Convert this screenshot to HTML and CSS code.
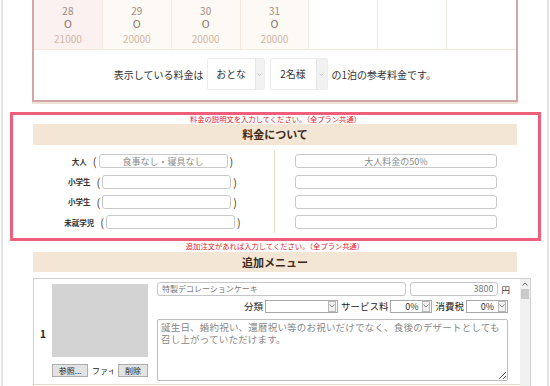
FILE: index.html
```html
<!DOCTYPE html>
<html>
<head>
	<title>料金設定</title>
	<meta charset="utf-8">
	<link rel="stylesheet" href="styles.css">
</head>
<body>
	<div class="page">
		<div class="calendar">
			<div class="cal-grid">
				<div class="cal-cell today"><span class="day">28</span><span class="mark">O</span><span class="fee">21000</span></div>
				<div class="cal-cell open"><span class="day">29</span><span class="mark">O</span><span class="fee">20000</span></div>
				<div class="cal-cell open"><span class="day">30</span><span class="mark">O</span><span class="fee">20000</span></div>
				<div class="cal-cell open"><span class="day">31</span><span class="mark">O</span><span class="fee">20000</span></div>
				<div class="cal-cell"></div>
				<div class="cal-cell"></div>
				<div class="cal-cell"></div>
			</div>
			<div class="fee-note">
				<span>表示している料金は</span>
				<span class="big-select">
					<span class="val">おとな</span>
					<span class="arrow narrow"><svg width="5" height="3" viewBox="0 0 5 3"><polyline points="0.5,0.5 2.5,2.5 4.5,0.5" fill="none" stroke="#bbb" stroke-width="0.8"/></svg></span>
				</span>
				<span class="big-select second">
					<span class="val">2名様</span>
					<span class="arrow"><svg width="5" height="3" viewBox="0 0 5 3"><polyline points="0.5,0.5 2.5,2.5 4.5,0.5" fill="none" stroke="#bbb" stroke-width="0.8"/></svg></span>
				</span>
				<span class="tail">の1泊の参考料金です。</span>
			</div>
		</div>

		<div class="highlight">
			<p class="notice">料金の説明文を入力してください。（全プラン共通）</p>
			<h2 class="section-title">料金について</h2>
			<div class="price-table">
				<div class="price-col left">
					<div class="price-row"><span class="lbl">大人</span><span class="paren">(</span><input class="desc" type="text" placeholder="食事なし・寝具なし"><span class="paren">)</span></div>
					<div class="price-row"><span class="lbl">小学生</span><span class="paren">(</span><input class="desc" type="text"><span class="paren">)</span></div>
					<div class="price-row"><span class="lbl">小学生</span><span class="paren">(</span><input class="desc" type="text"><span class="paren">)</span></div>
					<div class="price-row"><span class="lbl">未就学児</span><span class="paren">(</span><input class="desc" type="text"><span class="paren">)</span></div>
				</div>
				<div class="price-col">
					<div class="price-row"><input class="rate" type="text" placeholder="大人料金の50%"></div>
					<div class="price-row"><input class="rate" type="text"></div>
					<div class="price-row"><input class="rate" type="text"></div>
					<div class="price-row"><input class="rate" type="text"></div>
				</div>
			</div>
		</div>

		<p class="notice outside">追加注文があれば入力してください。（全プラン共通）</p>
		<h2 class="section-title outside">追加メニュー</h2>

		<div class="menu-box">
			<div class="menu-list">
				<div class="menu-row">
					<div class="menu-no">1</div>
					<div class="menu-photo">
						<div class="photo-box"></div>
						<div class="file-row">
							<button class="btn browse">参照...</button>
							<span class="file-name">ファイル未選択</span>
							<button class="btn remove">削除</button>
						</div>
					</div>
					<div class="menu-fields">
						<div class="menu-line">
							<input class="item-name" type="text" value="特製デコレーションケーキ">
							<input class="item-price" type="text" value="3800">
							<span class="yen">円</span>
						</div>
						<div class="menu-line opts">
							<span class="opt-label">分類</span>
							<span class="mini-select cat">
								<span class="val"></span>
								<span class="mini-arrow"><svg width="6" height="4" viewBox="0 0 6 4"><polyline points="0.5,0.5 3,3 5.5,0.5" fill="none" stroke="#777" stroke-width="0.9"/></svg></span>
							</span>
							<span class="opt-label gap">サービス料</span>
							<span class="mini-select pct">
								<span class="val">0%</span>
								<span class="mini-arrow"><svg width="6" height="4" viewBox="0 0 6 4"><polyline points="0.5,0.5 3,3 5.5,0.5" fill="none" stroke="#777" stroke-width="0.9"/></svg></span>
							</span>
							<span class="opt-label gap">消費税</span>
							<span class="mini-select pct">
								<span class="val">0%</span>
								<span class="mini-arrow"><svg width="6" height="4" viewBox="0 0 6 4"><polyline points="0.5,0.5 3,3 5.5,0.5" fill="none" stroke="#777" stroke-width="0.9"/></svg></span>
							</span>
						</div>
						<textarea class="item-desc">誕生日、婚約祝い、還暦祝い等のお祝いだけでなく、食後のデザートとしても召し上がっていただけます。</textarea>
					</div>
				</div>
			</div>
			<div class="scrollbar">
				<div class="scroll-up"><svg width="6" height="4" viewBox="0 0 6 4"><polyline points="0.5,3.5 3,1 5.5,3.5" fill="none" stroke="#666" stroke-width="1"/></svg></div>
				<div class="scroll-thumb"></div>
			</div>
		</div>
	</div>
</body>
</html>
```

FILE: styles.css
```css
body {
    margin: 0;
    font-family: "Noto Sans CJK JP", "Noto Sans", sans-serif;
    color: #333;
    background: #fff;
}

.page {
    width: 544px;
    min-height: 386px;
    margin-left: 1px;
    border-left: 2px solid #e2e2e2;
    border-right: 2px solid #e2e2e2;
}

/* calendar */
.calendar {
    margin: -2px 29px 0;
    border: 2px solid #d2a6a6;
    box-shadow: 0 2px 0 #efe3d6;
}

.cal-grid {
    display: grid;
    grid-template-columns: repeat(7, 1fr);
    border-bottom: 1px solid #f3e9dd;
}

.cal-cell {
    height: 49px;
    box-sizing: border-box;
    padding-top: 4px;
    display: flex;
    flex-direction: column;
    align-items: center;
    border-right: 1px solid #f3e9dd;
    font-size: 10px;
    line-height: 14px;
}

.cal-cell:last-child {
    border-right: none;
}

.cal-cell.today {
    background: #fbf1f1;
}

.cal-cell.open {
    background: #fdfaf6;
}

.day {
    color: #a58a7a;
}

.mark {
    color: #8c7666;
    font-family: "DejaVu Sans", sans-serif;
    font-size: 10px;
}

.fee {
    color: #d2b6a4;
}

.fee-note {
    display: flex;
    justify-content: center;
    align-items: center;
    padding: 8px 0 10px;
    font-size: 10px;
}

.big-select {
    display: inline-flex;
    width: 58px;
    height: 32px;
    box-sizing: border-box;
    margin-left: 3px;
    border: 1px solid #ededed;
    border-radius: 2px;
    background: #fff;
}

.big-select.second {
    margin-left: 5px;
}

.big-select .val {
    flex: 1;
    text-align: center;
    line-height: 30px;
    color: #333;
}

.big-select .arrow {
    width: 10px;
    display: flex;
    align-items: center;
    justify-content: center;
    background: #f2f2f2;
    border-left: 1px solid #e6e6e6;
}

.big-select .arrow.narrow {
    width: 8px;
}

.tail {
    margin-left: 4px;
}

/* highlighted price description */
.highlight {
    margin: 10px 6px 0 7px;
    border: 3px solid #ef5f7c;
}

.notice {
    margin: 0;
    font-size: 7.3px;
    line-height: 9px;
    color: #e8202a;
    text-align: center;
}

.notice.outside {
    margin-top: 1px;
}

.section-title {
    margin: 0 21px 0 20px;
    height: 21px;
    line-height: 21px;
    background: #f3e6d4;
    color: #3e2a1c;
    font-size: 11px;
    font-weight: bold;
    text-align: center;
}

.section-title.outside {
    margin: 1px 30px 0;
    height: 20px;
    line-height: 20px;
}

.price-table {
    display: grid;
    grid-template-columns: 1fr 1fr;
    margin: 5px 21px 5px 20px;
}

.price-col {
    display: flex;
    flex-direction: column;
    padding-top: 1px;
}

.price-col.left {
    border-right: 1px solid #efdcc2;
}

.price-row {
    height: 20.4px;
    display: flex;
    align-items: center;
    justify-content: center;
}

.lbl {
    font-size: 7.5px;
    font-weight: bold;
    color: #333;
    margin-right: 4px;
}

.paren {
    font-size: 11px;
    line-height: 14px;
    color: #4b3a2c;
    padding: 0 2px;
}

.desc,
.rate {
    height: 14px;
    box-sizing: border-box;
    padding: 0 4px;
    border: 1px solid #c9c9c9;
    border-radius: 3px;
    font-family: "Noto Sans CJK JP", "Noto Sans", sans-serif;
    font-size: 9px;
    text-align: center;
    outline: none;
}

.desc {
    width: 129px;
}

.rate {
    width: 202px;
}

.desc::placeholder,
.rate::placeholder {
    color: #8a8a8a;
}

/* additional menu */
.menu-box {
    display: flex;
    height: 110px;
    margin: 6px 16px 0 30px;
    border: 1px solid #d0d0d0;
}

.menu-list {
    flex: 1;
}

.menu-row {
    display: flex;
    padding: 3px 0 3px;
    border-bottom: 1px solid #eadbc6;
}

.menu-no {
    width: 18px;
    display: flex;
    align-items: center;
    justify-content: center;
    padding-top: 4px;
    font-size: 10px;
    font-weight: bold;
    color: #222;
}

.menu-photo {
    width: 96px;
    padding-top: 2px;
}

.photo-box {
    height: 73px;
    background: #d3d3d3;
}

.file-row {
    display: flex;
    align-items: center;
    margin-top: 7px;
    height: 13px;
}

.btn {
    height: 13px;
    padding: 0;
    border: 1px solid #adadad;
    background: #e3e3e3;
    font-family: "Noto Sans CJK JP", "Noto Sans", sans-serif;
    font-size: 8px;
    line-height: 11px;
    color: #222;
}

.btn.browse {
    width: 36px;
}

.btn.remove {
    width: 30px;
}

.file-name {
    width: 21px;
    margin: 0 5px 0 4px;
    overflow: hidden;
    white-space: nowrap;
    font-size: 8px;
    color: #222;
}

.menu-fields {
    width: 353px;
    margin-left: 9px;
}

.menu-line {
    display: flex;
    align-items: center;
}

.item-name,
.item-price {
    height: 14px;
    box-sizing: border-box;
    border: 1px solid #c6c6c6;
    border-radius: 3px;
    font-family: "Noto Sans CJK JP", "Noto Sans", sans-serif;
    color: #777;
    outline: none;
}

.item-name {
    width: 251px;
    padding: 0 4px;
    font-size: 8px;
}

.item-price {
    width: 88px;
    margin-left: 4px;
    padding: 0 4px;
    font-size: 9px;
    text-align: right;
}

.yen {
    margin-left: 3px;
    font-size: 8.5px;
    color: #333;
}

.menu-line.opts {
    justify-content: flex-end;
    height: 13px;
    margin-top: 4px;
    padding-right: 2px;
}

.opt-label {
    font-size: 9.5px;
    color: #222;
    margin-right: 2px;
}

.opt-label.gap {
    margin-left: 3px;
}

.mini-select {
    display: inline-flex;
    height: 13px;
    box-sizing: border-box;
    border: 1px solid #a9a9a9;
    background: #fff;
}

.mini-select.cat {
    width: 73px;
}

.mini-select.pct {
    width: 42px;
}

.mini-select .val {
    flex: 1;
    text-align: right;
    padding-right: 4px;
    font-size: 9px;
    line-height: 11px;
    color: #333;
}

.mini-arrow {
    width: 8px;
    margin: 0 1px 0 0;
    display: flex;
    align-items: center;
    justify-content: center;
    border: 1px solid #b8b8b8;
    box-sizing: border-box;
    background: #f0f0f0;
}

.item-desc {
    display: block;
    width: 351px;
    height: 62px;
    box-sizing: border-box;
    margin-top: 6px;
    padding: 1px 3px;
    border: 1px solid #bdbdbd;
    border-radius: 2px;
    font-family: "Noto Sans CJK JP", "Noto Sans", sans-serif;
    font-size: 9.5px;
    letter-spacing: 0.2px;
    line-height: 12px;
    color: #888;
    outline: none;
}

.scrollbar {
    width: 10px;
    background: #f1f1f1;
}

.scroll-up {
    height: 10px;
    display: flex;
    align-items: center;
    justify-content: center;
}

.scroll-thumb {
    height: 10px;
    margin: 0 1px;
    background: #c9c9c9;
}
```
